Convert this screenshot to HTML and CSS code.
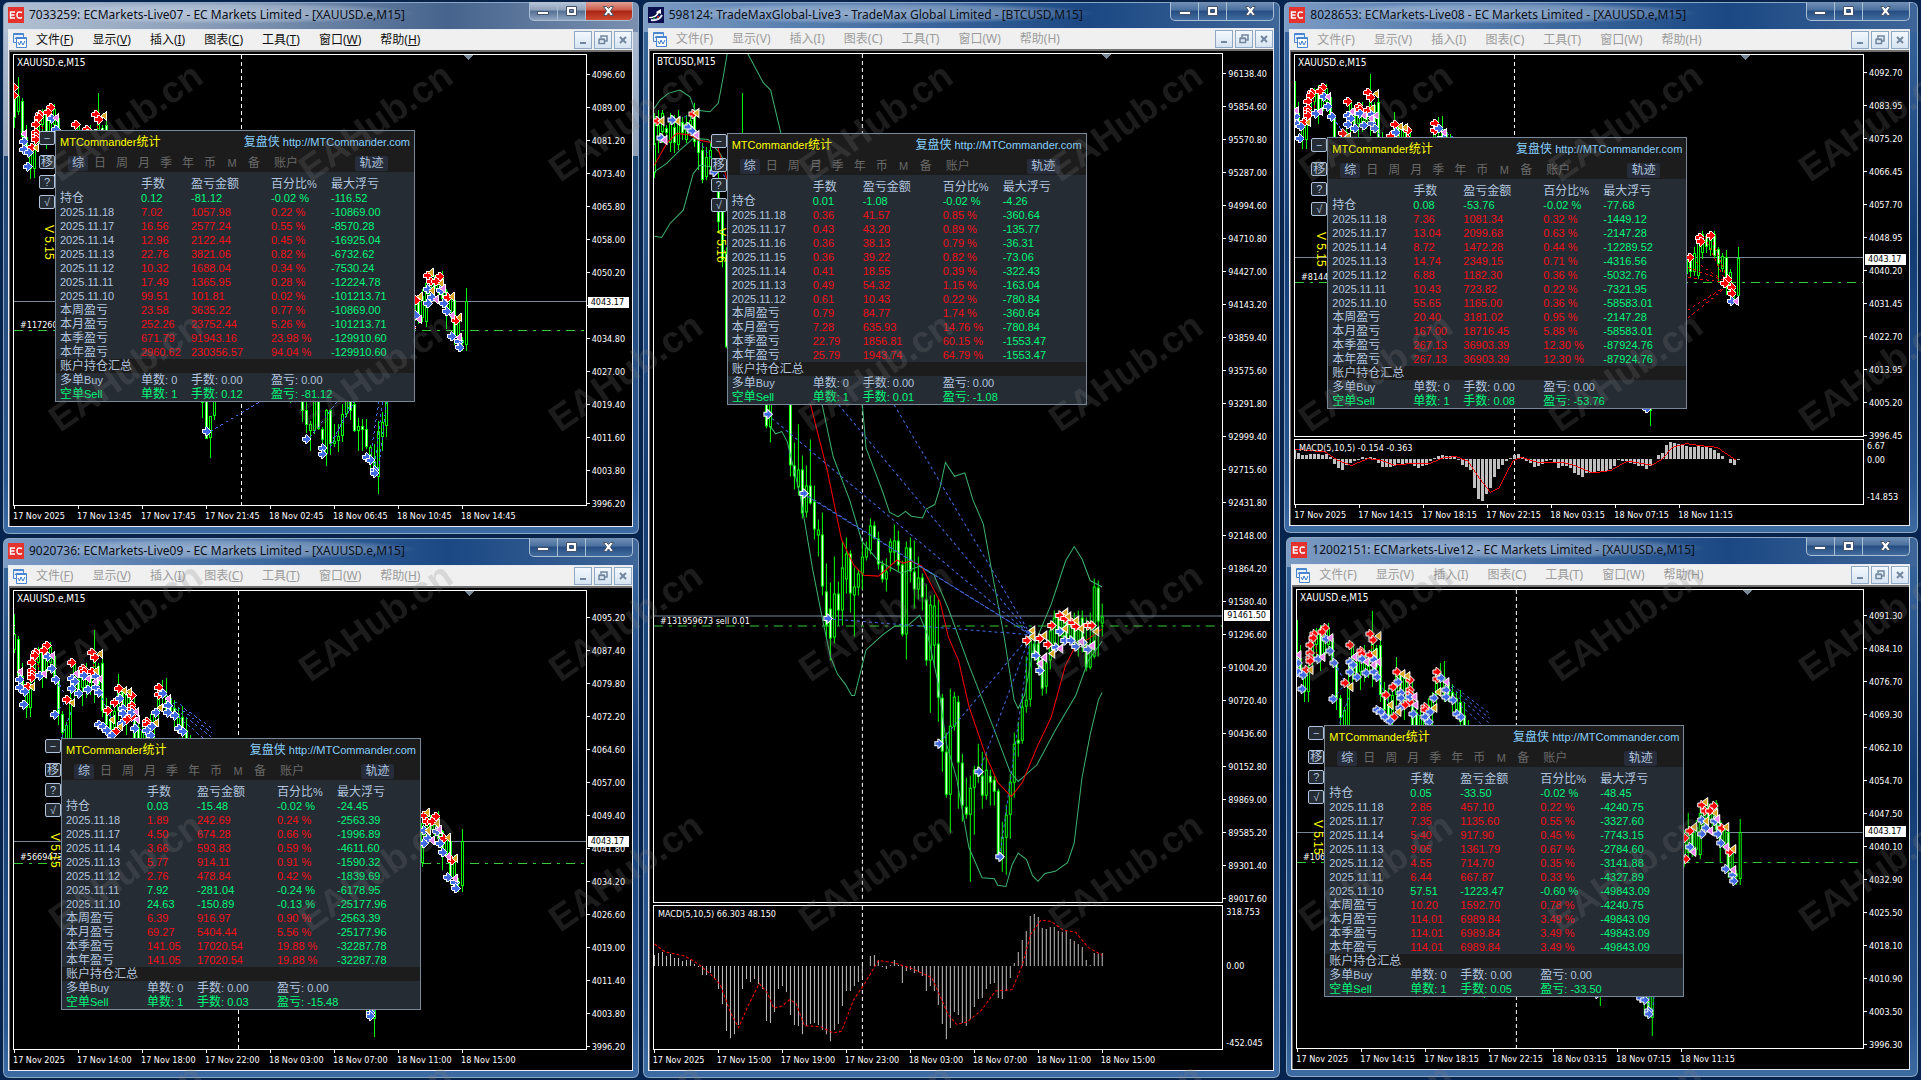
FILE: index.html
```html
<!DOCTYPE html>
<html lang="zh-CN">
<head>
<meta charset="utf-8">
<title>MT4 终端</title>
<link rel="stylesheet" href="styles.css">
</head>
<body>
<main class="desktop">
  <div class="column column-left">
    <section class="window active" data-terminal="live07"></section>
    <section class="window" data-terminal="live09"></section>
  </div>
  <div class="column column-middle">
    <section class="window compact" data-terminal="live3"></section>
  </div>
  <div class="column column-right">
    <section class="window" data-terminal="live08"></section>
    <section class="window inset" data-terminal="live12"></section>
  </div>
</main>
<svg class="watermark" aria-hidden="true">
  <defs>
    <pattern id="mark" width="250" height="250" patternUnits="userSpaceOnUse">
      <text x="127" y="134" text-anchor="middle" transform="rotate(-35 127 124)">EAHub.cn</text>
    </pattern>
  </defs>
  <rect width="100%" height="100%" fill="url(#mark)"/>
</svg>
<script src="app.js"></script>
</body>
</html>
```
FILE: styles.css
```css
* { box-sizing: border-box; }

body {
  margin: 0;
  background: #05244f;
  font-family: "Noto Sans", "Noto Sans CJK SC", sans-serif;
  font-size: 12px;
}

button {
  margin: 0;
  padding: 0;
  border: 0;
  background: none;
  color: inherit;
  font: inherit;
}

ul { margin: 0; padding: 0; list-style: none; }

.desktop {
  display: grid;
  grid-template-columns: 638fr 640fr 636fr;
  gap: 2px;
  min-height: 100vh;
  padding: 1px 2px;
}

.column { display: grid; gap: 2px; }
.column-left { grid-template-rows: 534fr 542fr; }
.column-right { grid-template-rows: 533fr 543fr; }

/* window frame */
.window {
  display: flex;
  flex-direction: column;
  min-width: 0;
  padding: 0 6px 7px 5px;
  border: 1px solid #0d2240;
  border-radius: 7px;
  background: linear-gradient(90deg, #7d9cc4 0, #3f6aa0 40%, #1b4883 70%, #3f6699 100%) 0 0 / 100% 30px no-repeat,
    linear-gradient(180deg, #3a689f 0, #123b72 45%, #2a5690 90%, #3f6ba3 100%);
  box-shadow: inset 0 0 0 1px #8aa8cc;
}
.window.active {
  background: linear-gradient(90deg, #b4c1d3 0, #8b9fba 30%, #46648d 70%, #7b90b0 100%) 0 0 / 100% 30px no-repeat,
    linear-gradient(180deg, #b6c5d8 0, #8c9db4 29%, #1f446f 29%, #2a5690 90%, #3f6ba3 100%);
}
.column-right .window { padding-right: 8px; }
.window.inset { margin: 0 0 1px 2px; }

.titlebar {
  display: flex;
  flex: none;
  height: 27px;
}
.compact .titlebar { height: 26px; }
.app-icon {
  flex: none;
  width: 16px;
  height: 16px;
  margin-top: 5px;
}
.titlebar h1 {
  flex: 1;
  min-width: 0;
  margin: 0;
  padding-left: 5px;
  overflow: hidden;
  color: #0a0f18;
  font-size: 12px;
  font-weight: 400;
  line-height: 26px;
  white-space: nowrap;
}
.titlebar h1 span {
  display: inline-block;
  height: 22px;
  padding-right: 12px;
  border-radius: 12px;
  background: radial-gradient(closest-side, rgba(225, 234, 245, .5), rgba(225, 234, 245, .3) 70%, transparent);
}
.controls {
  display: flex;
  flex: none;
  height: 19px;
  border: 1px solid #a9bdd5;
  border-top: 0;
  border-radius: 0 0 5px 5px;
  background: linear-gradient(#7190b5, #4a709f 45%, #254d82 50%, #426b9e);
  overflow: hidden;
}
.controls button { width: 28px; border-right: 1px solid #a9bdd5; }
.controls button:last-child { width: 46px; border-right: 0; }
.controls svg { display: block; margin: 0 auto; }
.active .controls { background: linear-gradient(#b9c6d8, #8da1bb 45%, #536e93 50%, #8fa5c0); }
.active .controls button:last-child { background: linear-gradient(#e0a196, #cd5b48 45%, #a82313 50%, #cd4b30); }

.client {
  display: flex;
  flex: 1;
  flex-direction: column;
  min-height: 0;
  border: 1px solid #e8ecf2;
}
.menubar {
  display: flex;
  flex: none;
  align-items: center;
  height: 20px;
  padding-left: 4px;
  background: #f0f0f0;
  color: #9c9c9c;
}
.active .menubar { color: #111; }
.menubar nav {
  display: flex;
  flex: 1;
  gap: 19px;
  padding-left: 8px;
}
.menubar nav button { white-space: nowrap; line-height: 18px; }
.mdi { display: flex; gap: 2px; }
.mdi button {
  width: 18px;
  height: 18px;
  border: 1px solid #8fa9c4;
  background: linear-gradient(#f3f8fd, #d6e4f2);
}
.mdi svg { display: block; margin: 0 auto; }

/* chart */
.chart {
  position: relative;
  display: grid;
  flex: 1;
  grid-template-columns: 1fr 45px;
  grid-template-rows: 1fr auto;
  min-height: 0;
  padding: 2px 0 0 3px;
  border: solid #6f6f6f;
  border-width: 2px 0 0 1px;
  background: #000;
  color: #fff;
  font-family: "DejaVu Sans Condensed", "DejaVu Sans", sans-serif;
  font-size: 9px;
}
.chart.btc { grid-template-columns: 1fr 50px; }
.chart.with-macd { grid-template-rows: 387fr 66fr auto; }
.chart.btc.with-macd { grid-template-rows: 851fr 145fr auto; }
.plot {
  display: block;
  width: 100%;
  height: 100%;
  min-height: 0;
  border: 1px solid #fff;
}
.with-macd .plot { height: calc(100% - 2px); }
.with-macd .plot.macd { height: 100%; }
.plot-cell { position: relative; min-height: 0; }
.plot-cell > .plot { position: absolute; inset: 0; }
.plot text { fill: #fff; dominant-baseline: central; }
.plot .symbol { font-size: 10px; }

.price-axis { position: relative; min-height: 0; }
.price-axis ul, .macd-axis { height: 0; }
.price-axis li {
  display: flex;
  align-items: center;
  gap: 2px;
  height: 33px;
}
.price-axis li::before { width: 3px; height: 1px; background: #fff; content: ""; }
.current-price {
  position: absolute;
  left: 1px;
  right: 3px;
  height: 11px;
  padding-left: 3px;
  background: #fff;
  color: #000;
  line-height: 11px;
}
.macd-axis li { padding-left: 3px; line-height: 14px; }
.btc .macd-axis li:nth-child(1) { height: 54px; }
.btc .macd-axis li:nth-child(2) { height: 77px; }
.xau .macd-axis li:nth-child(1) { height: 14px; }
.xau .macd-axis li:nth-child(2) { height: 37px; }

.time-axis {
  display: flex;
  grid-column: 1 / -1;
  height: 20px;
}
.time-axis li { flex: none; width: 64px; line-height: 14px; white-space: nowrap; }
.time-axis li::before {
  display: block;
  width: 1px;
  height: 3px;
  margin-left: 1px;
  background: #fff;
  content: "";
}

/* statistics panel floating over the chart */
.panel {
  position: absolute;
  width: 360px;
  border: 1px solid #778899;
  background: #262c34;
  color: #b0c4de;
  font-family: "Liberation Sans", "Noto Sans CJK SC", sans-serif;
  font-size: 11px;
}
.cjk { font-size: 12px; }
.panel-head { height: 41px; background: #1c1c1c; }
.panel-title {
  display: flex;
  align-items: center;
  justify-content: space-between;
  height: 18px;
  padding: 0 4px;
}
.panel-title h2 { margin: 0; color: #ff0; font-size: 11px; font-weight: 400; }
.panel-title a { color: #87cefa; text-decoration: none; }
.tabs {
  display: flex;
  align-items: center;
  height: 21px;
  margin-top: 4px;
  padding-left: 11px;
}
.tabs button { width: 22px; height: 15px; color: #696969; line-height: 15px; }
.tabs .wide { width: 42px; }
.tabs .selected, .tabs .trace { border-radius: 2px; background: #262c3a; color: #b0c4de; }
.tabs .selected { width: 20px; margin: 0 1px; }
.tabs .trace { width: 33px; margin-left: 48px; }

.stats {
  width: 100%;
  margin-top: 3px;
  border-collapse: collapse;
  table-layout: fixed;
}
.panel-head + .stats { margin-top: 5px; }
.stats th, .stats td {
  height: 14px;
  padding: 0;
  font-weight: 400;
  line-height: 14px;
  text-align: left;
  white-space: nowrap;
}
.stats tr > :first-child { padding-left: 4px; }
.stats .c-name { width: 85px; }
.stats .c-lots { width: 50px; }
.stats .c-sum { width: 80px; }
.stats .c-rate { width: 60px; }
.stats .section { background: #1c1c1c; }
.gain { color: #f01018; }
.loss, .sell th { color: #00f57a; }

.tools {
  position: absolute;
  top: 0;
  right: 100%;
  display: flex;
  flex-direction: column;
  align-items: center;
  gap: 6px;
  width: 18px;
}
.tools button {
  width: 16px;
  height: 14px;
  border: 1px solid #b0c4de;
  border-radius: 2px;
  background: #262c34;
  line-height: 12px;
}
.tools button:first-child { margin-bottom: 4px; }
.tools span {
  margin-top: 10px;
  align-self: flex-end;
  color: #ff0;
  font-size: 12px;
  line-height: 14px;
  white-space: nowrap;
  writing-mode: vertical-rl;
}

.watermark {
  position: fixed;
  inset: 0;
  width: 100%;
  height: 100%;
  pointer-events: none;
}
.watermark text {
  fill: rgba(128, 128, 128, .22);
  font: 700 37px "Liberation Sans", sans-serif;
}
```
FILE: app.js
```js
// Each candle: [index, high, low, body top, body bottom, filled]
const morning = [
  [-2, 30, 160, 60, 130, 1], [-1, -2, 120, 60, 110, 0],
  [0, 65, 200, 75, 190, 1], [1, 150, 245, 190, 235, 1], [2, 240, 322, 240, 290, 0], [3, 210, 320, 215, 290, 0],
  [4, 110, 230, 140, 200, 0], [5, 100, 200, 120, 150, 0], [6, 90, 228, 100, 190, 1], [7, 88, 200, 95, 180, 0],
  [8, 84, 165, 100, 150, 0], [9, 120, 215, 130, 200, 1], [10, 195, 345, 205, 310, 1], [11, 300, 390, 310, 370, 1],
  [12, 335, 430, 345, 400, 0], [13, 200, 430, 260, 430, 0], [14, 140, 260, 150, 240, 0], [15, 190, 260, 200, 245, 1],
  [16, 160, 285, 170, 230, 0], [17, 150, 260, 180, 240, 0], [18, 170, 250, 190, 230, 0], [19, 48, 275, 120, 200, 0],
  [20, 150, 240, 160, 220, 1], [21, 130, 320, 150, 300, 1], [22, 260, 350, 290, 345, 1], [23, 280, 385, 330, 370, 1],
  [24, 265, 400, 300, 370, 0], [25, 185, 330, 230, 300, 0], [26, 230, 340, 240, 310, 1], [27, 240, 375, 250, 320, 0],
  [28, 240, 330, 250, 310, 0], [29, 260, 430, 290, 400, 1], [30, 300, 430, 350, 420, 1], [31, 345, 430, 360, 420, 0],
  [32, 345, 420, 350, 400, 0], [33, 310, 390, 330, 380, 0], [34, 290, 400, 310, 350, 0], [35, 215, 330, 235, 300, 0],
  [36, 205, 290, 235, 260, 1], [37, 198, 320, 250, 300, 0], [38, 250, 320, 260, 300, 1], [39, 268, 350, 290, 320, 1],
  [40, 290, 370, 310, 350, 0], [41, 285, 410, 320, 380, 1], [42, 320, 430, 360, 420, 1], [43, 375, 450, 390, 440, 1]
];
const overnight = [
  [47, -30, 72, -20, 27, 1], [48, -30, 136, -20, 134, 1], [49, 67, 192, 67, 133, 0], [50, -30, 77, -30, 65, 0],
  [69, -20, 28, -20, 10, 0], [72, -20, 83, -20, 50, 1], [73, 25, 116, 48, 92, 1], [74, 80, 170, 90, 111, 0],
  [75, -20, 120, -10, 112, 0], [76, -20, 108, -10, 106, 1], [77, 100, 150, 105, 137, 1], [78, 45, 215, 48, 180, 0],
  [79, 45, 182, 48, 150, 1], [80, 90, 160, 142, 150, 0], [81, 90, 174, 125, 142, 0], [82, 30, 143, 60, 125, 0],
  [83, 0, 70, 10, 60, 0], [84, -10, 77, 10, 50, 1], [85, 20, 113, 30, 112, 1], [86, 72, 170, 95, 112, 0],
  [87, 75, 170, 95, 107, 1], [88, 75, 165, 105, 160, 1], [89, 152, 240, 160, 205, 0], [90, 150, 250, 200, 245, 1],
  [91, 80, 300, 110, 248, 0], [92, 55, 170, 85, 130, 0], [93, -10, 130, 10, 97, 0]
];
const noon = [
  [97, 180, 290, 200, 270, 0], [98, 130, 270, 180, 250, 0], [99, 180, 260, 190, 240, 1], [100, 150, 255, 170, 240, 0],
  [101, 100, 268, 130, 255, 0], [102, 90, 190, 100, 170, 0], [103, 100, 170, 110, 150, 1], [104, 100, 180, 115, 160, 0],
  [105, 90, 190, 100, 180, 1], [106, 150, 277, 155, 210, 1], [107, 170, 240, 180, 230, 0], [108, 160, 325, 185, 300, 1],
  [109, 230, 330, 240, 310, 0], [110, 300, 346, 310, 320, 0], [111, 147, 345, 187, 327, 0]
];
const morningMarks = {
  r: [[-5, 35], [-5, 60], [72, 118], [70, 128], [60, 150], [60, 175], [62, 188], [60, 198], [48, 225], [107, 98], [97, 112], [180, 150], [215, 168], [217, 178], [240, 118], [250, 135], [240, 180], [167, 265], [323, 232], [360, 255], [310, 275], [360, 285], [360, 298], [360, 320], [347, 330], [288, 300], [312, 367], [443, 230], [443, 252], [407, 335], [407, 345]],
  b: [[108, 133], [120, 168], [85, 192], [132, 205], [25, 205], [25, 230], [40, 240], [37, 283], [130, 312], [180, 200], [190, 210], [180, 232], [203, 247], [218, 192], [228, 235], [252, 195], [254, 230], [262, 245], [325, 262], [335, 295], [335, 310], [330, 340], [262, 345], [275, 350], [285, 365], [300, 378], [370, 358], [362, 307], [455, 248], [468, 284], [468, 306], [490, 315], [432, 308], [502, 357], [515, 367], [420, 352], [405, 365], [418, 380]],
  o: [[62, 225], [265, 122], [180, 275], [337, 238], [352, 243], [300, 330], [325, 352], [253, 175], [445, 290], [432, 338]],
  p: [[26, 180], [97, 185], [120, 130], [193, 185], [228, 200], [265, 200], [250, 210], [373, 305], [375, 330], [470, 262]]
};
const overnightMarks = { b: [[170, 112], [470, 136], [518, 162], [518, 180], [650, 190], [662, 198], [675, 228], [673, 238]] };
const noonMarks = {
  r: [[97, 105], [132, 108], [105, 122], [122, 122], [60, 184], [47, 205], [48, 268], [157, 175], [180, 246]],
  b: [[96, 150], [135, 153], [110, 175], [97, 193], [145, 193], [60, 230], [155, 220], [168, 298], [190, 315], [192, 333]],
  o: [[107, 95], [72, 172], [168, 172], [190, 238], [135, 130], [108, 152]],
  p: [[143, 147], [120, 182], [70, 245], [168, 232], [190, 300]]
};
const morningLinks = [[460, 250, 600, 355], [470, 265, 600, 370], [480, 285, 600, 385], [500, 320, 590, 400], [120, 168, 167, 265], [130, 205, 180, 275], [130, 312, 167, 265], [150, 385, 180, 300], [265, 245, 300, 330], [340, 300, 410, 390]];
const overnightLinks = [[180, 112, 330, 22], [660, 190, 690, 0], [672, 230, 700, 0], [683, 245, 712, 0], [540, 162, 600, 30], [480, 130, 570, 10], [540, 150, 620, 10]];
const redLinks = [[48, 225, 72, 118], [72, 118, 85, 192], [240, 118, 262, 245], [323, 232, 335, 295], [360, 255, 375, 330]];

const btcLeft = [
  [0, 340, 535, 430, 520, 0], [1, 330, 460, 375, 410, 0], [2, 330, 430, 340, 395, 0], [3, 375, 430, 385, 400, 1],
  [4, 340, 455, 370, 430, 0], [5, 345, 460, 380, 430, 1], [6, 330, 450, 365, 435, 0], [7, 350, 420, 365, 400, 1],
  [8, 345, 430, 370, 420, 0], [9, 345, 400, 360, 390, 0], [10, 310, 440, 345, 425, 1], [11, 400, 510, 420, 460, 1],
  [12, 430, 550, 450, 540, 1], [13, 440, 540, 470, 530, 0], [14, 430, 520, 450, 500, 0], [16, 520, 700, 560, 665, 1],
  [17, 600, 800, 620, 780, 1], [18, 740, 1045, 760, 1040, 1], [22, 280, 500, 410, 480, 0]
];
const btcMain = [
  [28, -60, 65, -60, 60, 1], [29, -60, 97, -60, 62, 0], [34, -60, 175, -60, 150, 1], [35, 97, 205, 150, 175, 1],
  [36, 55, 220, 160, 200, 0], [37, 127, 272, 160, 260, 1], [38, 150, 270, 195, 258, 0], [39, 90, 240, 195, 237, 1],
  [40, 195, 320, 233, 297, 1], [41, 275, 360, 297, 312, 0], [42, 258, 450, 310, 430, 1], [43, 375, 550, 440, 520, 1],
  [44, 420, 600, 480, 548, 1], [45, 360, 560, 445, 547, 0], [46, 418, 520, 445, 485, 1], [47, 325, 520, 385, 485, 0],
  [48, 315, 445, 352, 413, 0], [49, 345, 490, 352, 445, 1], [50, 385, 545, 430, 450, 0], [51, 390, 450, 400, 432, 0],
  [52, 325, 435, 360, 400, 0], [53, 325, 370, 340, 362, 0], [54, 272, 355, 288, 345, 0], [55, 278, 320, 288, 318, 1],
  [56, 302, 390, 318, 378, 1], [57, 370, 420, 378, 412, 1], [58, 365, 440, 395, 413, 0], [59, 318, 395, 325, 350, 0],
  [60, 285, 375, 322, 350, 0], [61, 300, 395, 322, 380, 1], [62, 370, 545, 378, 540, 1], [63, 325, 598, 340, 540, 0],
  [64, 315, 420, 340, 395, 1], [65, 322, 480, 395, 435, 1], [66, 360, 460, 408, 435, 0], [67, 400, 485, 408, 455, 1],
  [68, 425, 610, 458, 600, 1], [69, 450, 720, 470, 600, 0], [70, 448, 615, 472, 565, 0], [71, 460, 740, 560, 685, 1],
  [72, 675, 855, 685, 810, 1], [73, 765, 915, 810, 908, 1], [74, 665, 997, 750, 908, 0], [75, 670, 760, 682, 752, 0],
  [76, 680, 940, 695, 835, 1], [77, 815, 970, 835, 935, 1], [78, 870, 965, 937, 955, 1], [79, 865, 1110, 892, 955, 0],
  [80, 842, 1000, 852, 893, 0], [81, 790, 880, 845, 868, 1], [82, 810, 940, 865, 910, 1], [83, 815, 920, 850, 912, 0],
  [84, 850, 935, 865, 880, 1], [85, 865, 935, 875, 902, 1], [86, 895, 1055, 900, 1052, 1], [87, 970, 1085, 1005, 1055, 0],
  [88, 932, 1092, 955, 1008, 0], [89, 860, 1010, 878, 955, 0], [90, 765, 915, 790, 880, 0], [91, 740, 820, 782, 792, 1],
  [92, 675, 790, 705, 785, 0], [93, 590, 720, 690, 705, 0], [94, 525, 705, 550, 690, 0], [95, 540, 600, 560, 585, 1],
  [96, 540, 630, 560, 610, 1], [97, 590, 680, 600, 663, 1], [98, 580, 675, 605, 660, 0], [99, 510, 620, 530, 600, 0],
  [100, 485, 580, 500, 560, 0], [101, 490, 570, 500, 540, 1], [102, 490, 560, 500, 545, 0], [103, 500, 560, 510, 550, 1],
  [104, 490, 560, 510, 545, 0], [105, 490, 570, 505, 555, 1], [106, 485, 590, 510, 560, 0], [107, 485, 580, 500, 560, 1],
  [108, 500, 625, 560, 615, 1], [109, 490, 620, 560, 615, 0], [110, 410, 595, 430, 590, 0], [111, 415, 590, 432, 510, 1],
  [112, 467, 545, 497, 515, 0]
];
const btcMarks = {
  b: [[310, 33], [398, 214], [456, 503], [728, 790], [825, 855], [874, 1052], [962, 588], [972, 622], [1011, 570], [1020, 533], [1032, 553], [1048, 553], [1060, 567], [1078, 558], [1088, 575]],
  r: [[942, 553], [972, 548], [992, 562], [1002, 520], [1020, 496], [1032, 502], [1050, 512], [1060, 522], [1088, 518], [1099, 519]],
  o: [[953, 530], [952, 545], [982, 542], [1002, 583], [1032, 490], [1040, 498], [1061, 508], [1072, 525], [1032, 525], [1109, 533]],
  p: [[982, 593], [973, 607], [1022, 573], [1099, 565], [1072, 555]]
};
const btcLeftMarks = {
  r: [[52, 363], [158, 342]], o: [[62, 363], [168, 340], [110, 362]],
  b: [[97, 360], [62, 415], [143, 382], [155, 393], [222, 515]], p: [[73, 420], [168, 405]]
};
const bandsMain = [
  [[540, 0], [550, 110], [570, 160], [590, 210], [607, 258], [628, 268], [646, 256], [660, 267], [687, 271], [697, 250], [717, 240], [730, 200], [743, 143], [765, 175], [790, 167], [810, 230], [835, 285], [857, 400], [885, 540], [910, 690], [920, 710], [935, 680], [960, 560], [1000, 470], [1035, 370], [1056, 337], [1075, 365], [1095, 415], [1124, 430]],
  [[443, 10], [470, 130], [510, 230], [540, 325], [580, 370], [635, 398], [680, 382], [715, 402], [750, 480], [800, 610], [860, 755], [900, 855], [920, 878], [965, 840], [1010, 760], [1060, 680], [1090, 600], [1124, 555]],
  [[317, 60], [330, 77], [345, 72], [358, 95], [390, 220], [420, 390], [445, 510], [463, 590], [480, 630], [500, 655], [515, 680], [522, 680], [550, 575], [590, 540], [620, 520], [650, 520], [680, 495], [700, 540], [725, 650], [745, 790], [770, 870], [800, 1030], [832, 1100], [862, 1102], [870, 1117], [890, 1120], [905, 1070], [920, 1043], [940, 1058], [955, 1095], [968, 1108], [985, 1090], [1010, 1085], [1040, 1065], [1056, 1020], [1075, 870], [1095, 770], [1115, 690], [1124, 673]]
];
const averageMain = [[412, 0], [455, 160], [490, 320], [520, 380], [545, 403], [580, 405], [625, 368], [640, 375], [660, 370], [685, 382], [730, 465], [750, 545], [775, 600], [800, 705], [840, 815], [870, 880], [903, 913], [930, 880], [965, 800], [1000, 730], [1035, 610], [1060, 565], [1090, 550], [1124, 527]];
const bandsLeft = [
  [[43, 325], [60, 300], [85, 280], [120, 270], [150, 290], [165, 330], [210, 335], [235, 310], [250, 230], [262, 160]],
  [[324, 162], [370, 248], [392, 270], [423, 400]],
  [[43, 515], [80, 490], [120, 450], [160, 415], [205, 418], [240, 460], [262, 500]],
  [[43, 708], [65, 712], [90, 670], [130, 630], [160, 520], [180, 495], [210, 500]]
];
const averageLeft = [[43, 495], [80, 430], [110, 400], [150, 405], [175, 420], [230, 430], [262, 540]];
const btcLinks = [[310, 33], [398, 214], [405, 220], [455, 503], [483, 10], [618, 10], [728, 790], [825, 855], [875, 1052]].map(p => [...p, 950, 540]);

const btcMacd = [1277, 1272, 1270, 1280, 1275, 1285, 1285, 1291, 1290, 1290, 1298, 1305, 1323, 1323, 1320, 1330, 1355, 1390, 1452, 1468, 1460, 1440, 1355, 1333, 1340, 1332, 1345, 1355, 1430, 1434, 1410, 1355, 1348, 1363, 1415, 1440, 1442, 1460, 1442, 1437, 1435, 1440, 1450, 1460, 1476, 1450, 1437, 1395, 1360, 1360, 1350, 1340, 1325, 1302, 1280, 1277, 1290, 1305, 1310, 1300, 1290, 1300, 1341, 1315, 1313, 1320, 1317, 1325, 1360, 1350, 1360, 1392, 1436, 1472, 1445, 1408, 1417, 1435, 1442, 1425, 1397, 1378, 1377, 1357, 1345, 1343, 1377, 1380, 1360, 1330, 1295, 1271, 1242, 1223, 1188, 1182, 1190, 1215, 1218, 1212, 1214, 1223, 1225, 1223, 1240, 1245, 1252, 1258, 1290, 1300, 1273, 1275, 1273];
const btcSignal = [[35, 1252], [60, 1270], [110, 1280], [140, 1297], [170, 1320], [195, 1345], [220, 1410], [240, 1445], [260, 1400], [290, 1343], [310, 1365], [325, 1400], [345, 1395], [365, 1380], [380, 1390], [400, 1440], [440, 1443], [470, 1457], [490, 1453], [520, 1380], [545, 1345], [580, 1290], [620, 1296], [660, 1308], [710, 1330], [750, 1415], [770, 1437], [795, 1432], [830, 1405], [865, 1360], [905, 1357], [930, 1300], [950, 1230], [975, 1197], [1000, 1200], [1030, 1220], [1060, 1225], [1090, 1260], [1124, 1278]];
const xauMacd = [1310, 1320, 1327, 1327, 1325, 1325, 1325, 1327, 1325, 1333, 1352, 1365, 1372, 1355, 1350, 1345, 1341, 1333, 1335, 1333, 1337, 1350, 1361, 1361, 1361, 1358, 1350, 1352, 1350, 1352, 1358, 1365, 1358, 1355, 1345, 1335, 1329, 1327, 1330, 1330, 1330, 1343, 1357, 1363, 1370, 1423, 1455, 1460, 1440, 1422, 1390, 1368, 1355, 1345, 1337, 1327, 1324, 1333, 1345, 1350, 1361, 1358, 1352, 1345, 1342, 1350, 1364, 1358, 1360, 1365, 1378, 1385, 1390, 1378, 1380, 1378, 1373, 1375, 1373, 1368, 1358, 1342, 1345, 1345, 1350, 1352, 1358, 1358, 1368, 1358, 1340, 1327, 1322, 1298, 1290, 1292, 1295, 1295, 1300, 1303, 1305, 1302, 1305, 1305, 1307, 1313, 1322, 1329, 1340, 1350, 1356, 1342];
const xauSignal = [[36, 1310], [60, 1313], [110, 1318], [140, 1342], [175, 1358], [215, 1338], [245, 1342], [280, 1357], [320, 1352], [365, 1353], [400, 1335], [430, 1332], [460, 1345], [485, 1390], [515, 1437], [535, 1425], [570, 1345], [590, 1334], [635, 1350], [690, 1348], [720, 1358], [765, 1380], [810, 1372], [850, 1345], [910, 1357], [935, 1340], [960, 1305], [995, 1294], [1030, 1300], [1070, 1305], [1115, 1342]];

const terminals = {
  live07: {
    title: '7033259: ECMarkets-Live07 - EC Markets Limited - [XAUUSD.e,M15]', underline: true, symbol: 'XAUUSD.e,M15', order: '#117260', orderY: 326,
    box: [14, 55, 572, 451], x0: 14, shift: 2, top: 4096.6, topY: 74.3, scale: 4.273, priceY: 302, greenY: 331, dayX: 241, flagX: 469,
    current: ['4043.17', 243], pad: 4, panel: [45, 78], version: 'V 5.15',
    prices: '4096.60 4089.00 4081.20 4073.40 4065.80 4058.00 4050.20 - 4034.80 4027.00 4019.40 4011.60 4003.80 3996.20',
    times: ['17 Nov 2025', '17 Nov 13:45', '17 Nov 17:45', '17 Nov 21:45', '18 Nov 02:45', '18 Nov 06:45', '18 Nov 10:45', '18 Nov 14:45'],
    rows: ['持仓|0.12|-81.12|-0.02|-116.52', '2025.11.18|7.02|1057.98|0.22|-10869.00', '2025.11.17|16.56|2577.24|0.55|-8570.28', '2025.11.14|12.96|2122.44|0.45|-16925.04', '2025.11.13|22.76|3821.06|0.82|-6732.62', '2025.11.12|10.32|1688.04|0.34|-7530.24', '2025.11.11|17.49|1365.95|0.28|-12224.78', '2025.11.10|99.51|101.81|0.02|-101213.71', '本周盈亏|23.58|3635.22|0.77|-10869.00', '本月盈亏|252.26|23752.44|5.26|-101213.71', '本季盈亏|671.79|91943.16|23.98|-129910.60', '本年盈亏|2960.62|230356.57|94.04|-129910.60']
  },
  live09: {
    title: '9020736: ECMarkets-Live09 - EC Markets Limited - [XAUUSD.e,M15]', underline: true, symbol: 'XAUUSD.e,M15', order: '#5669473', orderY: 858,
    box: [14, 591, 572, 459], x0: 14, shift: 1, top: 4095.2, topY: 617.7, scale: 4.33, priceY: 842, greenY: 864, dayX: 238, flagX: 470,
    current: ['4043.17', 246], pad: 11, panel: [51, 150], version: 'V 5.15',
    prices: '4095.20 4087.40 4079.80 4072.20 4064.60 4057.00 4049.40 4041.80 4034.20 4026.60 4019.00 4011.40 4003.80 3996.20',
    times: ['17 Nov 2025', '17 Nov 14:00', '17 Nov 18:00', '17 Nov 22:00', '18 Nov 03:00', '18 Nov 07:00', '18 Nov 11:00', '18 Nov 15:00'],
    rows: ['持仓|0.03|-15.48|-0.02|-24.45', '2025.11.18|1.89|242.69|0.24|-2563.39', '2025.11.17|4.50|674.28|0.66|-1996.89', '2025.11.14|3.66|593.83|0.59|-4611.60', '2025.11.13|5.77|914.11|0.91|-1590.32', '2025.11.12|2.76|478.84|0.42|-1839.69', '2025.11.11|7.92|-281.04|-0.24|-6178.95', '2025.11.10|24.63|-150.89|-0.13|-25177.96', '本周盈亏|6.39|916.97|0.90|-2563.39', '本月盈亏|69.27|5404.44|5.56|-25177.96', '本季盈亏|141.05|17020.54|19.88|-32287.78', '本年盈亏|141.05|17020.54|19.88|-32287.78']
  },
  live3: {
    title: '598124: TradeMaxGlobal-Live3 - TradeMax Global Limited - [BTCUSD,M15]', btc: true, symbol: 'BTCUSD,M15', order: '#131959673 sell 0.01', orderY: 620,
    box: [654, 54, 569, 847], macdBox: [654, 905, 569, 143], macdTitle: 'MACD(5,10,5) 66.303 48.150', macdLabels: ['318.753', '0.00', '-452.045'],
    x0: 654, priceY: 615, greenY: 625, dayX: 862, flagX: 1107,
    current: ['91461.50', 557], pad: 4, panel: [77, 82], version: 'V 5.16',
    prices: '96138.40 95854.60 95570.80 95287.00 94994.60 94710.80 94427.00 94143.20 93859.40 93575.60 93291.80 92999.40 92715.60 92431.80 92148.00 91864.20 91580.40 91296.60 91004.20 90720.40 90436.60 90152.80 89869.00 89585.20 89301.40 89017.60',
    times: ['17 Nov 2025', '17 Nov 15:00', '17 Nov 19:00', '17 Nov 23:00', '18 Nov 03:00', '18 Nov 07:00', '18 Nov 11:00', '18 Nov 15:00'],
    rows: ['持仓|0.01|-1.08|-0.02|-4.26', '2025.11.18|0.36|41.57|0.85|-360.64', '2025.11.17|0.43|43.20|0.89|-135.77', '2025.11.16|0.36|38.13|0.79|-36.31', '2025.11.15|0.36|39.22|0.82|-73.06', '2025.11.14|0.41|18.55|0.39|-322.43', '2025.11.13|0.49|54.32|1.15|-163.04', '2025.11.12|0.61|10.43|0.22|-780.84', '本周盈亏|0.79|84.77|1.74|-360.64', '本月盈亏|7.28|635.93|14.76|-780.84', '本季盈亏|22.79|1856.81|60.15|-1553.47', '本年盈亏|25.79|1943.74|64.79|-1553.47']
  },
  live08: {
    title: '8028653: ECMarkets-Live08 - EC Markets Limited - [XAUUSD.e,M15]', symbol: 'XAUUSD.e,M15', order: '#8144', orderY: 279, redFan: true,
    box: [1295, 55, 568, 384], macdBox: [1295, 442, 568, 64], macdTitle: 'MACD(5,10,5) -0.154 -0.363', macdLabels: ['6.67', '0.00', '-14.853'],
    x0: 1294, shift: 0, top: 4092.7, topY: 72.3, scale: 3.775, priceY: 258, greenY: 284, dayX: 1514, flagX: 1746,
    current: ['4043.17', 200], pad: 2, panel: [36, 85], version: 'V 5.15',
    prices: '4092.70 4083.95 4075.20 4066.45 4057.70 4048.95 4040.20 4031.45 4022.70 4013.95 4005.20 3996.45',
    times: ['17 Nov 2025', '17 Nov 14:15', '17 Nov 18:15', '17 Nov 22:15', '18 Nov 03:15', '18 Nov 07:15', '18 Nov 11:15'],
    rows: ['持仓|0.08|-53.76|-0.02|-77.68', '2025.11.18|7.36|1081.34|0.32|-1449.12', '2025.11.17|13.04|2099.68|0.63|-2147.28', '2025.11.14|8.72|1472.28|0.44|-12289.52', '2025.11.13|14.74|2349.15|0.71|-4316.56', '2025.11.12|6.88|1182.30|0.36|-5032.76', '2025.11.11|10.43|723.82|0.22|-7321.95', '2025.11.10|55.65|1165.00|0.36|-58583.01', '本周盈亏|20.40|3181.02|0.95|-2147.28', '本月盈亏|167.00|18716.45|5.88|-58583.01', '本季盈亏|267.13|36903.39|12.30|-87924.76', '本年盈亏|267.13|36903.39|12.30|-87924.76']
  },
  live12: {
    title: '12002151: ECMarkets-Live12 - EC Markets Limited - [XAUUSD.e,M15]', symbol: 'XAUUSD.e,M15', order: '#106', orderY: 857,
    box: [1297, 590, 566, 458], x0: 1296, shift: 0, top: 4091.3, topY: 615.6, scale: 4.516, priceY: 832, greenY: 862, dayX: 1516, flagX: 1748,
    current: ['4043.17', 237], pad: 10, panel: [31, 138], version: 'V 5.15',
    prices: '4091.30 4084.10 4076.70 4069.30 4062.10 4054.70 4047.50 4040.10 4032.90 4025.50 4018.10 4010.90 4003.50 3996.30',
    times: ['17 Nov 2025', '17 Nov 14:15', '17 Nov 18:15', '17 Nov 22:15', '18 Nov 03:15', '18 Nov 07:15', '18 Nov 11:15'],
    rows: ['持仓|0.05|-33.50|-0.02|-48.45', '2025.11.18|2.85|457.10|0.22|-4240.75', '2025.11.17|7.35|1135.60|0.55|-3327.60', '2025.11.14|5.40|917.90|0.45|-7743.15', '2025.11.13|9.05|1361.79|0.67|-2784.60', '2025.11.12|4.55|714.70|0.35|-3141.88', '2025.11.11|6.44|667.87|0.33|-4327.89', '2025.11.10|57.51|-1223.47|-0.60|-49843.09', '本周盈亏|10.20|1592.70|0.78|-4240.75', '本月盈亏|114.01|6989.84|3.49|-49843.09', '本季盈亏|114.01|6989.84|3.49|-49843.09', '本年盈亏|114.01|6989.84|3.49|-49843.09']
  }
};

const cjk = s => s.replace(/[\u4e00-\u9fff]+/g, '<span class="cjk">$&</span>');
const colors = { r: '#ff0000', b: '#4169e1', o: '#daa520', p: '#ee82ee' };

const candle = (x, h, l, t, b, fill) => {
  x = Math.round(x);
  [h, l, t, b] = [h, l, t, b].map(Math.round);
  return `<path d="M${x + .5} ${h}V${l}" stroke="#0f0"/><rect x="${x - .5}" y="${t + .5}" width="2" height="${Math.max(1, b - t - 1)}" fill="${fill ? '#fff' : '#000'}" stroke="#0f0"/>`;
};
const mark = (x, y, type) => {
  const d = 'rb'.includes(type) ? 'M-4-2H-1V-4.5H0L4.5 0L0 4.5H-1V2H-4Z' : 'M3-4.5V4.5L-3 0Z';
  return `<path d="${d}" transform="translate(${Math.round(x)} ${Math.round(y)})" fill="${colors[type]}" stroke="#fff"/>`;
};
const marks = (set, map) => Object.entries(set).map(([type, list]) => list.map(p => mark(...map(p), type)).join('')).join('');
const dashes = (list, map, color) => list.map(([a, b, c, d]) => `<path d="M${map([a, b])}L${map([c, d])}" stroke="${color}" stroke-dasharray="3 3" fill="none"/>`).join('');
const line = (points, map, color, extra = '') => `<path d="M${points.map(map).map(p => p.map(v => v.toFixed(1))).join('L')}" stroke="${color}" fill="none" ${extra}/>`;

// Converters from the three sampling grids of the gold series to a terminal's own axes
function goldMaps(t) {
  const place = (i, price) => [t.x0 + 4 * (i + t.shift), t.topY + (t.top - price) * t.scale];
  return {
    morning: ([x, y]) => place((x - 19) / 12, 4091.3 - (y / 3 - 20.6) / 4.516),
    overnight: ([x, y]) => place((x + 409) / 12 - 2, 4096.6 - (320.7 + y / 3) / 4.273),
    noon: ([x, y]) => place((x + 1121) / 12, 4091.3 - (154.4 + y / 3) / 4.516)
  };
}
function bars(list, map, toX) {
  return list.map(([i, h, l, a, b, f]) => {
    const at = y => map([toX(i), y]);
    return candle(at(h)[0], at(h)[1], at(l)[1], at(a)[1], at(b)[1], f);
  }).join('');
}
function gold(t) {
  const m = goldMaps(t);
  // the overnight grid counts from two bars earlier than the others
  let s = bars(morning, m.morning, i => 19 + 12 * i) + bars(overnight, m.overnight, i => 12 * i - 409) + bars(noon, m.noon, i => 12 * i - 1121);
  s += dashes(morningLinks, m.morning, '#4169e1') + dashes(overnightLinks, m.overnight, '#4169e1') + dashes(redLinks, m.morning, '#f00');
  s += marks(morningMarks, m.morning) + marks(overnightMarks, m.overnight);
  if (t.redFan) {
    const same = p => p;
    s += dashes([[1688, 269, 1724, 282], [1688, 279, 1724, 284], [1688, 312, 1726, 288], [1688, 320, 1726, 289], [1705, 238, 1726, 284], [1711, 238, 1728, 281], [1691, 260, 1725, 283]], same, '#f00');
    s += marks({ r: [[1700, 239], [1701, 243], [1711, 237], [1690, 259], [1728, 281], [1725, 285], [1732, 289], [1732, 295]], b: [[1732, 303]], p: [[1736, 303]] }, same);
  } else {
    s += marks(noonMarks, m.noon);
  }
  return s;
}
function bitcoin() {
  const main = ([x, y]) => [640 + x / 2.431, 400 + y / 2.306];
  const left = ([x, y]) => [640 + x / 3, y / 3];
  return bars(btcLeft, left, i => 43 + 12 * i) + bars(btcMain, main, i => 35 + 9.72 * i)
    + bandsLeft.map(b => line(b, left, '#3cb371')).join('') + bandsMain.map(b => line(b, main, '#3cb371')).join('')
    + line(averageLeft, left, '#f00') + line(averageMain, main, '#f00')
    + dashes(btcLinks, main, '#4169e1') + dashes([[97, 360, 168, 342], [155, 393, 262, 540]], left, '#4169e1')
    + marks(btcLeftMarks, left) + marks(btcMarks, main);
}

function plot(t) {
  const [x, y, w, h] = t.box;
  return `<svg class="plot" viewBox="${t.box.join(' ')}" preserveAspectRatio="none" shape-rendering="crispEdges">
    <path d="M${t.dayX + .5} ${y}V${y + h}" stroke="#fff" stroke-dasharray="4 3"/>
    <path d="M${x} ${t.priceY + .5}H${x + w}" stroke="#778899"/>
    <path d="M${x} ${t.greenY + .5}H${x + w}" stroke="#32cd32" stroke-dasharray="9 6 3 6"/>
    ${t.btc ? bitcoin() : gold(t)}
    <path d="M${t.flagX - 5} ${y}h10l-5 5z" fill="#778899"/>
    <text class="symbol" x="${x + 3}" y="${y + 8}">${t.symbol}</text>
    <text x="${x + 6}" y="${t.orderY}">${t.order}</text>
  </svg>`;
}
function macd(t) {
  const [x, y, w, h] = t.macdBox;
  const sy = t.btc ? 2.306 : 2.904, oy = t.btc ? 400 : 0, zero = oy + (t.btc ? 1302 : 1339) / sy;
  const map = t.btc ? ([a, b]) => [640 + a / 2.431, oy + b / sy] : ([a, b]) => [1280 + a / 2.446, oy + b / sy];
  const columns = (t.btc ? btcMacd : xauMacd).map((v, i) => `<path d="M${t.x0 + 4 * i + .5} ${Math.round(zero)}V${Math.round(oy + v / sy)}" stroke="#c0c0c0" stroke-width="${t.btc ? 1 : 3}"/>`).join('');
  return `<svg class="plot macd" viewBox="${t.macdBox.join(' ')}" preserveAspectRatio="none" shape-rendering="crispEdges">
    <path d="M${t.dayX + .5} ${y}V${y + h}" stroke="#fff" stroke-dasharray="4 3"/>${columns}
    ${line(t.btc ? btcSignal : xauSignal, map, '#f00', t.btc ? 'stroke-dasharray="3 2"' : '')}
    <text x="${x + 4}" y="${y + 8}">${t.macdTitle}</text></svg>`;
}

function panel(t) {
  const row = r => {
    const [name, lots, sum, rate, max] = r.split('|');
    const tone = sum.startsWith('-') ? 'loss' : 'gain';
    return `<tr><th scope="row">${cjk(name)}</th><td class="${tone}">${lots}</td><td class="${tone}">${sum}</td><td class="${tone}">${rate} %</td><td class="loss">${max}</td></tr>`;
  };
  const held = t.rows[0].split('|');
  return `<div class="panel" style="left:${t.panel[0]}px;top:${t.panel[1]}px">
    <div class="tools"><button>−</button><button class="cjk">移</button><button>?</button><button>√</button><span>${t.version}</span></div>
    <div class="panel-head">
      <div class="panel-title"><h2>${cjk('MTCommander统计')}</h2><a href="#">${cjk('复盘侠 http://MTCommander.com')}</a></div>
      <div class="tabs"><button class="selected cjk">综</button>${'日周月季年币M备'.split('').map(c => `<button>${cjk(c)}</button>`).join('')}<button class="wide cjk">账户</button><button class="trace cjk">轨迹</button></div>
    </div>
    <table class="stats">
      <colgroup><col class="c-name"><col class="c-lots"><col class="c-sum"><col class="c-rate"><col></colgroup>
      <thead><tr><td></td>${['手数', '盈亏金额', '百分比%', '最大浮亏'].map(h => `<th scope="col">${cjk(h)}</th>`).join('')}</tr></thead>
      <tbody>${t.rows.map(row).join('')}
        <tr class="section"><th colspan="5">${cjk('账户持仓汇总')}</th></tr>
        <tr><th scope="row">${cjk('多单Buy')}</th><td>${cjk('单数: 0')}</td><td>${cjk('手数: 0.00')}</td><td colspan="2">${cjk('盈亏: 0.00')}</td></tr>
        <tr class="sell loss"><th scope="row">${cjk('空单Sell')}</th><td>${cjk('单数: 1')}</td><td>${cjk('手数: ' + held[1])}</td><td colspan="2">${cjk('盈亏: ' + held[2])}</td></tr>
      </tbody>
    </table></div>`;
}

const ecIcon = '<svg class="app-icon" viewBox="0 0 16 16"><rect width="16" height="16" fill="#e5322d"/><path d="M7 5H2.500V11H7M2.500 8H6.500M14 5.500Q9 3.500 9 8T14 10.500" fill="none" stroke="#fff" stroke-width="1.500"/></svg>';
const tmIcon = '<svg class="app-icon" viewBox="0 0 16 16"><rect width="16" height="16" fill="#0b0f4e"/><path d="M1 10Q7 10 9 6L8 5L13 2V7L11 6Q8 12 1 11Z" fill="#fff"/><path d="M3 13Q11 14 14 8" fill="none" stroke="#dfe4f2" stroke-width="2"/><circle cx="6" cy="11" r="1" fill="#2fae4e"/><circle cx="10" cy="10" r="1" fill="#d8352c"/></svg>';
const chartIcon = '<svg width="15" height="15" viewBox="0 0 15 15"><path d="M.5 .5H10.500V9.500H.5ZM.5 1.500H10.500" fill="#e8f1fc" stroke="#4a86cf"/><path d="M2 6L3.500 4L5 7" fill="none" stroke="#3a78c8"/><path d="M3.500 4.500H13.500V14.500H3.500ZM3.500 5.500H13.500" fill="#fff" stroke="#4a86cf"/><path d="M5 9L6.500 12L8 8L10 12L12 8" fill="none" stroke="#3a78c8"/></svg>';
const icon = (d, w, h) => `<svg width="${w}" height="${h}" viewBox="0 0 ${w} ${h}">${d}</svg>`;
const minimize = icon('<rect x="1.500" y="9.500" width="11" height="3" fill="#fff" stroke="#44536b"/>', 14, 18);
const maximize = icon('<path d="M1.500 4.500H11.500V13.500H1.500ZM4.500 7.500V10.500H8.500V7.500Z" fill="#fff" fill-rule="evenodd" stroke="#44536b"/>', 13, 18);
const close = icon('<path d="M1.500 4.500H4.500L6.500 6.500L8.500 4.500H11.500L8.500 9L11.500 13.500H8.500L6.500 11L4.500 13.500H1.500L4.500 9Z" fill="#fff" stroke="#44536b"/>', 13, 18);
const mdiMin = icon('<path d="M5 11H11" stroke="#71879f" stroke-width="2"/>', 16, 16);
const mdiRestore = icon('<path d="M6 6V4H12V9H10M4 7.500H9.500V11.500H4ZM4 7H9.500" fill="none" stroke="#71879f" stroke-width="1.500"/>', 16, 16);
const mdiClose = icon('<path d="M5 5L11 11M11 5L5 11" stroke="#71879f" stroke-width="2"/>', 16, 16);
const menus = [['文件', 'F'], ['显示', 'V'], ['插入', 'I'], ['图表', 'C'], ['工具', 'T'], ['窗口', 'W'], ['帮助', 'H']];

document.querySelectorAll('[data-terminal]').forEach(node => {
  const t = terminals[node.dataset.terminal];
  node.innerHTML = `
    <header class="titlebar">${t.btc ? tmIcon : ecIcon}<h1><span>${t.title}</span></h1>
      <div class="controls"><button aria-label="最小化">${minimize}</button><button aria-label="最大化">${maximize}</button><button aria-label="关闭">${close}</button></div></header>
    <div class="client">
      <div class="menubar">${chartIcon}<nav>${menus.map(([n, k]) => `<button>${n}(${t.underline ? `<u>${k}</u>` : k})</button>`).join('')}</nav>
        <div class="mdi"><button aria-label="最小化图表">${mdiMin}</button><button aria-label="还原图表">${mdiRestore}</button><button aria-label="关闭图表">${mdiClose}</button></div></div>
      <div class="chart ${t.btc ? 'btc' : 'xau'} ${t.macdBox ? 'with-macd' : ''}">
        <div class="plot-cell">${plot(t)}</div>
        <div class="price-axis"><ul style="padding-top:${t.pad}px">${t.prices.split(' ').map(p => `<li>${p === '-' ? '' : p}</li>`).join('')}</ul><div class="current-price" style="top:${t.current[1]}px">${t.current[0]}</div></div>
        ${t.macdBox ? `<div class="plot-cell">${macd(t)}</div><ul class="macd-axis">${t.macdLabels.map(p => `<li>${p}</li>`).join('')}</ul>` : ''}
        <ul class="time-axis">${t.times.map(p => `<li>${p}</li>`).join('')}</ul>
        ${panel(t)}
      </div>
    </div>`;
});
```
